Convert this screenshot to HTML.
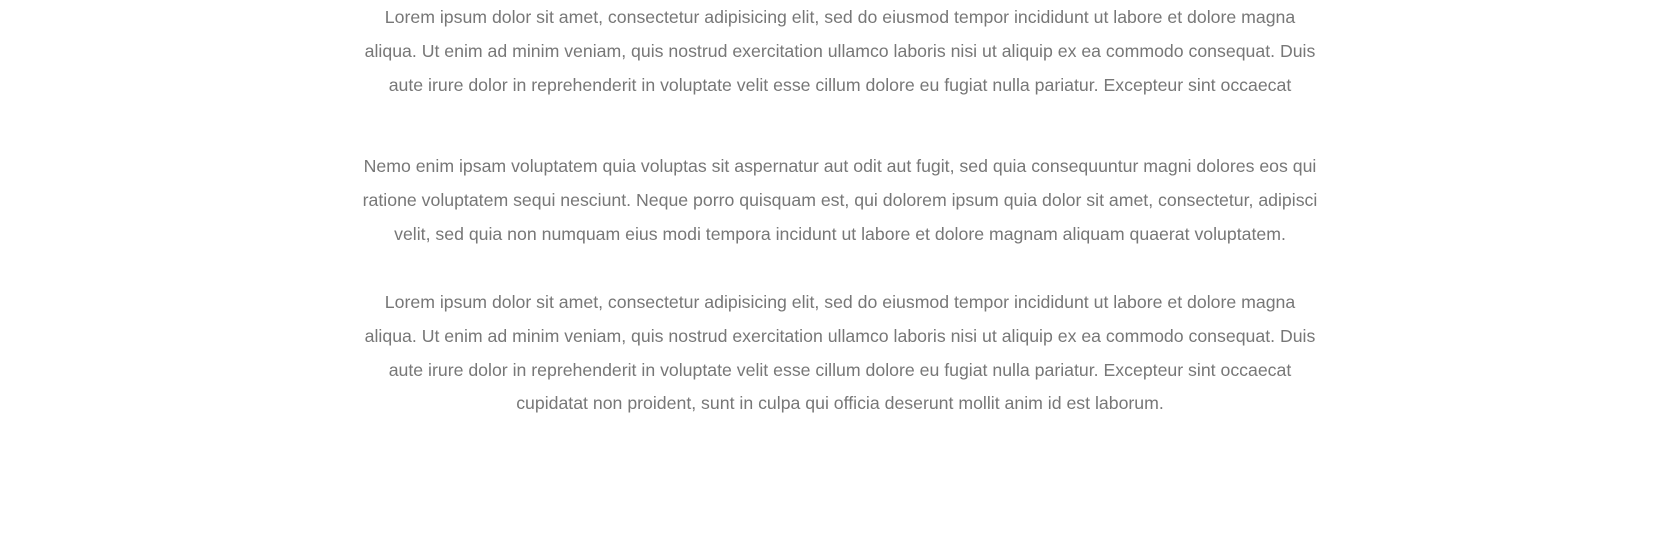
<!DOCTYPE html>
<html><head><meta charset="utf-8"><style>
body{margin:0;width:1680px;height:549px;background:#fff;overflow:hidden;font-family:"Liberation Sans",sans-serif;}
.p{position:absolute;left:0;width:1680px;text-align:center;color:#777;font-size:17.7px;line-height:33.8px;white-space:nowrap;}
</style></head><body>
<div class="p" style="top:1px">Lorem ipsum dolor sit amet, consectetur adipisicing elit, sed do eiusmod tempor incididunt ut labore et dolore magna<br>aliqua. Ut enim ad minim veniam, quis nostrud exercitation ullamco laboris nisi ut aliquip ex ea commodo consequat. Duis<br>aute irure dolor in reprehenderit in voluptate velit esse cillum dolore eu fugiat nulla pariatur. Excepteur sint occaecat</div>
<div class="p" style="top:150px">Nemo enim ipsam voluptatem quia voluptas sit aspernatur aut odit aut fugit, sed quia consequuntur magni dolores eos qui<br>ratione voluptatem sequi nesciunt. Neque porro quisquam est, qui dolorem ipsum quia dolor sit amet, consectetur, adipisci<br>velit, sed quia non numquam eius modi tempora incidunt ut labore et dolore magnam aliquam quaerat voluptatem.</div>
<div class="p" style="top:286px">Lorem ipsum dolor sit amet, consectetur adipisicing elit, sed do eiusmod tempor incididunt ut labore et dolore magna<br>aliqua. Ut enim ad minim veniam, quis nostrud exercitation ullamco laboris nisi ut aliquip ex ea commodo consequat. Duis<br>aute irure dolor in reprehenderit in voluptate velit esse cillum dolore eu fugiat nulla pariatur. Excepteur sint occaecat<br>cupidatat non proident, sunt in culpa qui officia deserunt mollit anim id est laborum.</div>
</body></html>
